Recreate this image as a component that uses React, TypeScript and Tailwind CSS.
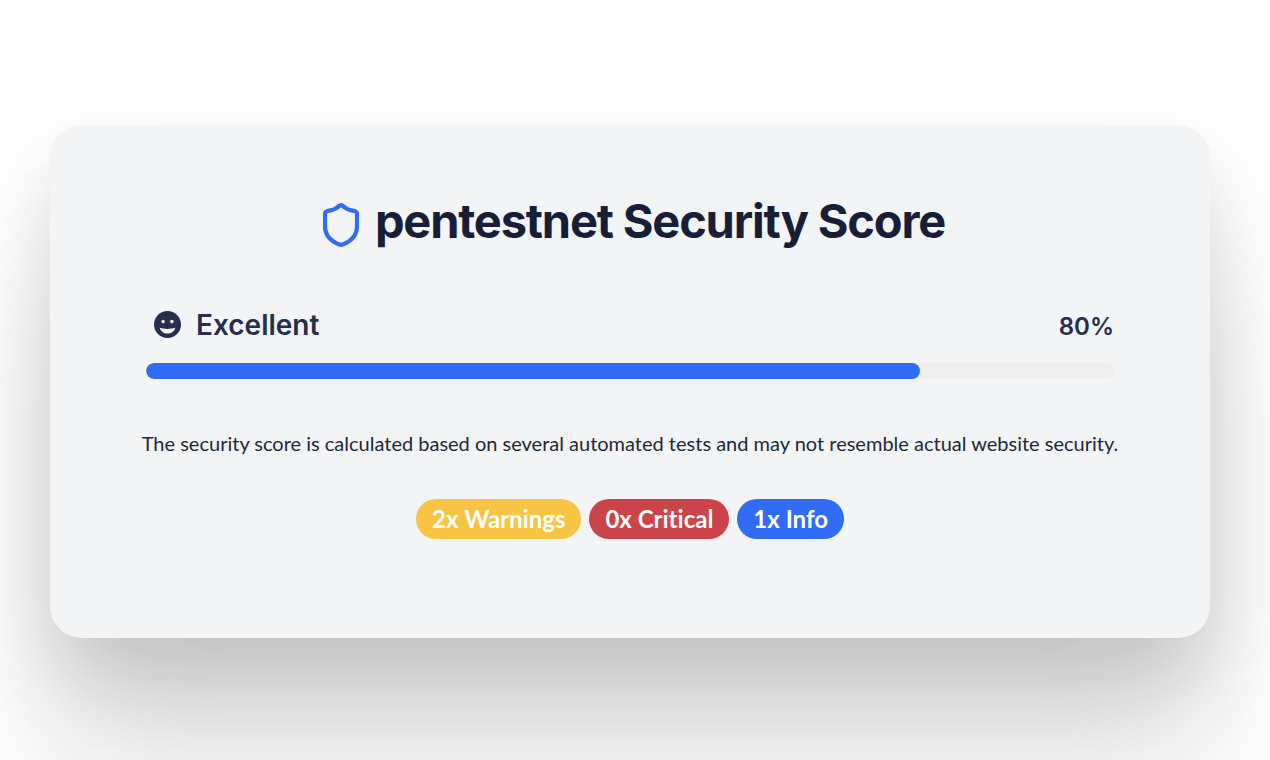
import React from 'react';

type Finding = {
  count: number;
  label: string;
  color: string;
};

const score = 80;

const findings: Finding[] = [
  { count: 2, label: 'Warnings', color: 'bg-[#f7c444]' },
  { count: 0, label: 'Critical', color: 'bg-[#cb444a]' },
  { count: 1, label: 'Info', color: 'bg-[#306cf6]' }
];

const ShieldIcon = () => (
  <svg
    className="mt-2 h-11 w-9 text-[#306cf6]"
    viewBox="0 0 36 44"
    fill="none"
    stroke="currentColor"
    strokeWidth="4.2"
    strokeLinecap="round"
    strokeLinejoin="round"
    aria-hidden="true"
  >
    <path d="M16.8 2.6a2.300 2.300 0 0 1 2.400 0C21 3.700 22.500 5.300 25 6.400c2.600 1.100 5 1.200 7 1.800 1.400.4 2 1.200 2 2.500V23c0 9-5.800 15.200-14.400 18.500a4.500 4.500 0 0 1-3.200 0C7.800 38.200 2 32 2 23V10.700c0-1.300.6-2.100 2-2.500 2-.6 4.400-.7 7-1.800 2.500-1.100 4-2.700 5.800-3.800Z" />
  </svg>
);

const SmileIcon = () => (
  <svg className="size-7" viewBox="0 0 28 28" aria-hidden="true">
    <circle cx="13.500" cy="13.500" r="13.500" fill="currentColor" />
    <circle cx="9.100" cy="10.600" r="1.800" fill="#f3f4f6" />
    <circle cx="17.900" cy="10.600" r="1.800" fill="#f3f4f6" />
    <path d="M5.700 16.800c2.300.8 4.900 1.100 7.800 1.100s5.500-.3 7.800-1.100c-.8 3.500-3.900 5.800-7.800 5.800s-7-2.300-7.800-5.800Z" fill="#f3f4f6" />
  </svg>
);

const ScoreBar = ({ value }: { value: number }) => (
  <div className="px-8">
    <div className="flex items-end justify-between font-semibold text-[#262d4d]">
      <p className="flex items-center gap-[14px] pl-2 text-[28px] leading-9">
        <SmileIcon />
        Excellent
      </p>
      <p className="text-2xl leading-8">{value}%</p>
    </div>
    <div
      className="mt-5 h-4 overflow-hidden rounded-full bg-[#efefef]"
      role="progressbar"
      aria-label="Security score"
      aria-valuenow={value}
      aria-valuemin={0}
      aria-valuemax={100}
    >
      <div className="h-full rounded-full bg-[#306cf6]" style={{ width: `${value}%` }} />
    </div>
  </div>
);

const App = () => {
  return (
    <main className="min-h-screen overflow-hidden bg-white pt-[125px] pr-[60px] pb-[122px] pl-[50px] font-['Inter',sans-serif]">
      <section className="rounded-4xl bg-[#f3f4f6] px-16 pt-[68px] pb-[99px] shadow-[0_40px_80px_rgba(0,0,0,0.14),0_140px_140px_rgba(0,0,0,0.12)]">
        <h1 className="flex items-center justify-center gap-4 pl-2 text-[47px] leading-[56px] font-bold tracking-tight text-[#191e38]">
          <ShieldIcon />
          pentestnet Security Score
        </h1>
        <div className="mt-[58px]">
          <ScoreBar value={score} />
        </div>
        <p className="mt-12 text-center font-['Lato',sans-serif] text-xl leading-8 text-[#1f2937]">
          The security score is calculated based on several automated tests and may not resemble actual website security.
        </p>
        <ul className="mt-10 flex flex-wrap justify-center gap-2 font-['Lato',sans-serif] text-2xl leading-10 font-bold text-white [font-variant-ligatures:none]">
          {findings.map(({ count, label, color }) => (
            <li key={label} className={`rounded-full px-4 ${color}`}>
              {count}x {label}
            </li>
          ))}
        </ul>
      </section>
    </main>
  );
};

export default App;
